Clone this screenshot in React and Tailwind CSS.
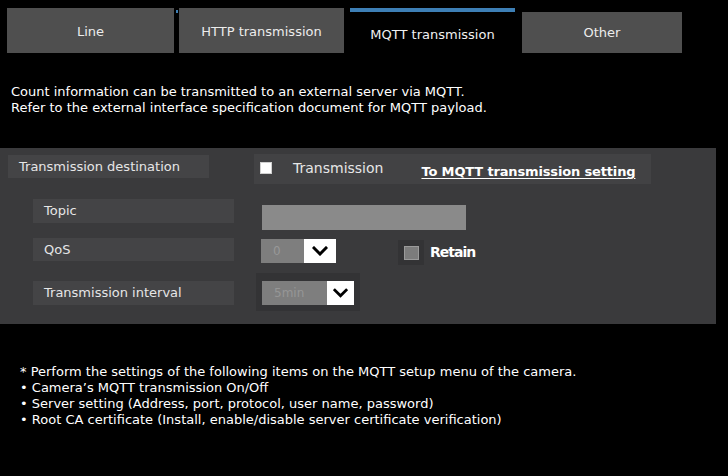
import React from "react";

const font = { fontFamily: '"DejaVu Sans", Tahoma, Verdana, sans-serif' };

function Chevron({ className = "" }) {
  return (
    <svg viewBox="0 0 16 10" className={className}>
      <polyline points="2,2 8,8 14,2" fill="none" stroke="#000" strokeWidth="3" strokeLinecap="square" />
    </svg>
  );
}

function Label({ children, className = "" }) {
  return (
    <div className={`w-[201px] bg-[#444446] flex items-center pl-[11px] text-[13px] text-[#e6e6e6] ${className}`}>
      {children}
    </div>
  );
}

export default function App() {
  return (
    <div className="w-[728px] h-[476px] bg-black overflow-hidden text-white" style={font}>
      {/* Tabs */}
      <div className="flex items-end pt-[8px] pl-[7px] h-[53px]">
        <div className="w-[167px] h-[45px] bg-[#4f4f4f] flex items-center justify-center pt-[3px] text-[13px] text-[#ececec]">Line</div>
        <div className="w-[5px] h-[45px] flex items-start justify-center pt-[2px]">
          <div className="w-[2px] h-[3px] bg-[#3d7fb5]" />
        </div>
        <div className="w-[165px] h-[45px] bg-[#4f4f4f] flex items-center justify-center pt-[3px] text-[13px] text-[#ececec]">HTTP transmission</div>
        <div className="w-[6px] h-[45px]" />
        <div className="w-[165px] h-[45px] border-t-[4px] border-[#3d7fb5] bg-black flex items-center justify-center pt-[4px] text-[13px] text-[#f0f0f0]">MQTT transmission</div>
        <div className="w-[7px]" />
        <div className="w-[160px] h-[41px] bg-[#4f4f4f] flex items-center justify-center pt-[1px] text-[13px] text-[#ececec]">Other</div>
      </div>

      {/* Intro */}
      <div className="mt-[31px] pl-[11px] text-[13px] leading-[16px] text-white">
        <div>Count information can be transmitted to an external server via MQTT.</div>
        <div>Refer to the external interface specification document for MQTT payload.</div>
      </div>

      {/* Panel */}
      <div className="mt-[32px] w-[716px] bg-[#3a3a3c] pt-[6px] pb-[13px]">
        {/* Row 1 */}
        <div className="flex items-start h-[30px] pl-[8px]">
          <Label className="mt-[1px] h-[23px]">Transmission destination</Label>
          <div className="ml-[45px] w-[397px] h-[30px] bg-[#424244] flex items-center">
            <div className="ml-[6px] -mt-[3px] w-[12px] h-[12px] bg-white border border-[#cfcfcf]" />
            <span className="ml-[21px] -mt-[2px] text-[14px] text-[#e6e6e6]">Transmission</span>
            <span className="ml-[38px] mt-[6px] text-[13px] font-bold tracking-[-0.15px] text-white underline underline-offset-2">To MQTT transmission setting</span>
          </div>
        </div>

        {/* Topic */}
        <div className="flex items-start h-[31px] mt-[15px] pl-[33px]">
          <Label className="h-[24px]">Topic</Label>
          <div className="ml-[28px] mt-[6px] w-[204px] h-[25px] bg-[#8a8a8a]" />
        </div>

        {/* QoS */}
        <div className="flex items-start h-[27px] mt-[8px] pl-[33px]">
          <Label className="h-[23px]">QoS</Label>
          <div className="ml-[27px] mt-[1px] w-[75px] h-[24px] flex">
            <div className="w-[43px] h-full bg-[#7e7e7e] flex items-center pl-[12px] text-[12px] text-[#989898]">0</div>
            <div className="flex-1 h-full bg-white flex items-center justify-center">
              <Chevron className="w-[16px] h-[10px]" />
            </div>
          </div>
          <div className="ml-[62px] mt-[2px] w-[26px] h-[25px] bg-[#333335] flex items-center justify-center">
            <div className="w-[15px] h-[14px] bg-[#7c7c7c] border border-[#9a9a9a]" />
          </div>
          <span className="ml-[6px] mt-[4px] text-[14px] font-bold tracking-[-1px] text-white">Retain</span>
        </div>

        {/* Interval */}
        <div className="flex items-start h-[38px] mt-[8px] pl-[33px]">
          <Label className="mt-[8px] h-[24px]">Transmission interval</Label>
          <div className="ml-[22px] w-[104px] h-[38px] bg-[#333335] pl-[6px] pt-[8px]">
            <div className="w-[92px] h-[24px] flex">
              <div className="w-[65px] h-full bg-[#7e7e7e] flex items-center pl-[12px] text-[12px] text-[#969696]">5min</div>
              <div className="flex-1 h-full bg-white flex items-center justify-center">
                <Chevron className="w-[15px] h-[10px]" />
              </div>
            </div>
          </div>
        </div>
      </div>

      {/* Footer */}
      <div className="mt-[40px] pl-[20px] text-[13px] leading-[16px] text-white">
        <div>* Perform the settings of the following items on the MQTT setup menu of the camera.</div>
        <div>• Camera’s MQTT transmission On/Off</div>
        <div>• Server setting (Address, port, protocol, user name, password)</div>
        <div>• Root CA certificate (Install, enable/disable server certificate verification)</div>
      </div>
    </div>
  );
}
